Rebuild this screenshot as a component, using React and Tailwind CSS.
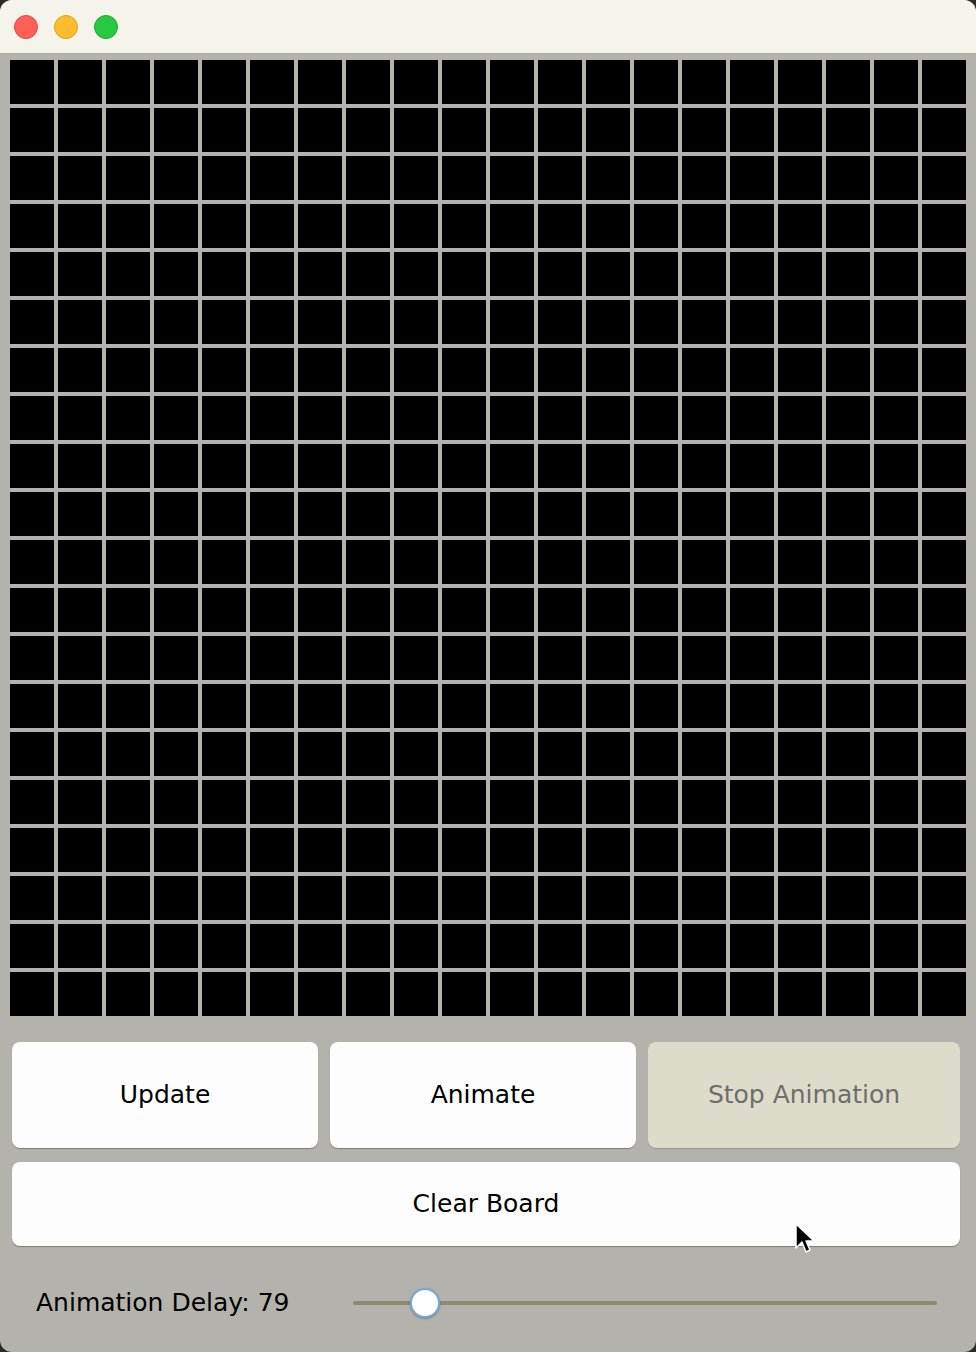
const ROWS = 20;
const COLS = 20;

function TrafficLights() {
  return (
    <div className="flex items-center gap-4 pl-[14px]">
      <span className="h-6 w-6 rounded-full bg-[#fe5f57] border border-[#e2463f]" />
      <span className="h-6 w-6 rounded-full bg-[#febc2e] border border-[#e1a116]" />
      <span className="h-6 w-6 rounded-full bg-[#28c840] border border-[#14ae2a]" />
    </div>
  );
}

function Cursor() {
  return (
    <svg
      className="pointer-events-none absolute left-[794px] top-[1222px]"
      width="22"
      height="34"
      viewBox="0 0 22 34"
    >
      <path
        d="M2 2 L2 26 L8 20 L12 30 L16 28 L12 19 L20 19 Z"
        fill="#000"
        stroke="#fff"
        strokeWidth="1.5"
        strokeLinejoin="round"
      />
    </svg>
  );
}

export default function App() {
  const cells = Array.from({ length: ROWS * COLS });

  return (
    <div
      className="relative h-[1352px] w-[976px] bg-[#2b2b2b]"
      style={{ fontFamily: '"DejaVu Sans", "Liberation Sans", sans-serif' }}
    >
      <div className="flex h-full w-full flex-col overflow-hidden rounded-[12px] bg-[#b3b2ac]">
        {/* title bar */}
        <div className="flex h-[54px] shrink-0 items-center border-b border-[#a8a79c] bg-[#f5f4ea]">
          <TrafficLights />
        </div>

        {/* board */}
        <div className="pl-[10px] pt-[6px]">
          <div className="grid w-[956px] grid-cols-[repeat(20,44px)] gap-[4px]">
            {cells.map((_, i) => (
              <div key={i} className="h-[44px] w-[44px] bg-black" />
            ))}
          </div>
        </div>

        {/* controls */}
        <div className="flex flex-col gap-[14px] px-[12px] pt-[26px] pr-[16px]">
          <div className="flex gap-[12px]">
            <button className="h-[106px] w-[306px] rounded-[8px] bg-[#fdfdfe] text-[25px] text-black shadow-[0_1px_1px_rgba(0,0,0,0.3)]">
              Update
            </button>
            <button className="h-[106px] w-[306px] rounded-[8px] bg-[#fdfdfe] text-[25px] text-black shadow-[0_1px_1px_rgba(0,0,0,0.3)]">
              Animate
            </button>
            <button className="h-[106px] w-[312px] rounded-[8px] bg-[#dddccb] text-[25px] text-[#6e6e6a] shadow-[0_1px_1px_rgba(0,0,0,0.15)]">
              Stop Animation
            </button>
          </div>
          <button className="h-[84px] w-[948px] rounded-[8px] bg-[#fdfdfe] text-[25px] text-black shadow-[0_1px_1px_rgba(0,0,0,0.3)]">
            Clear Board
          </button>
        </div>

        {/* delay slider */}
        <div className="flex items-center pl-[36px] pt-[38px]">
          <span className="w-[317px] text-[25px] text-black">Animation Delay: 79</span>
          <div className="relative flex h-[32px] w-[584px] items-center">
            <div className="h-[4px] w-full rounded-full bg-[#8b8a6c]" />
            <div className="absolute left-[57px] top-[1px] h-[30px] w-[30px] rounded-full border-2 border-[#74a9d8] bg-white shadow-[0_1px_2px_rgba(0,0,0,0.3)]" />
          </div>
        </div>
      </div>
      <Cursor />
    </div>
  );
}
